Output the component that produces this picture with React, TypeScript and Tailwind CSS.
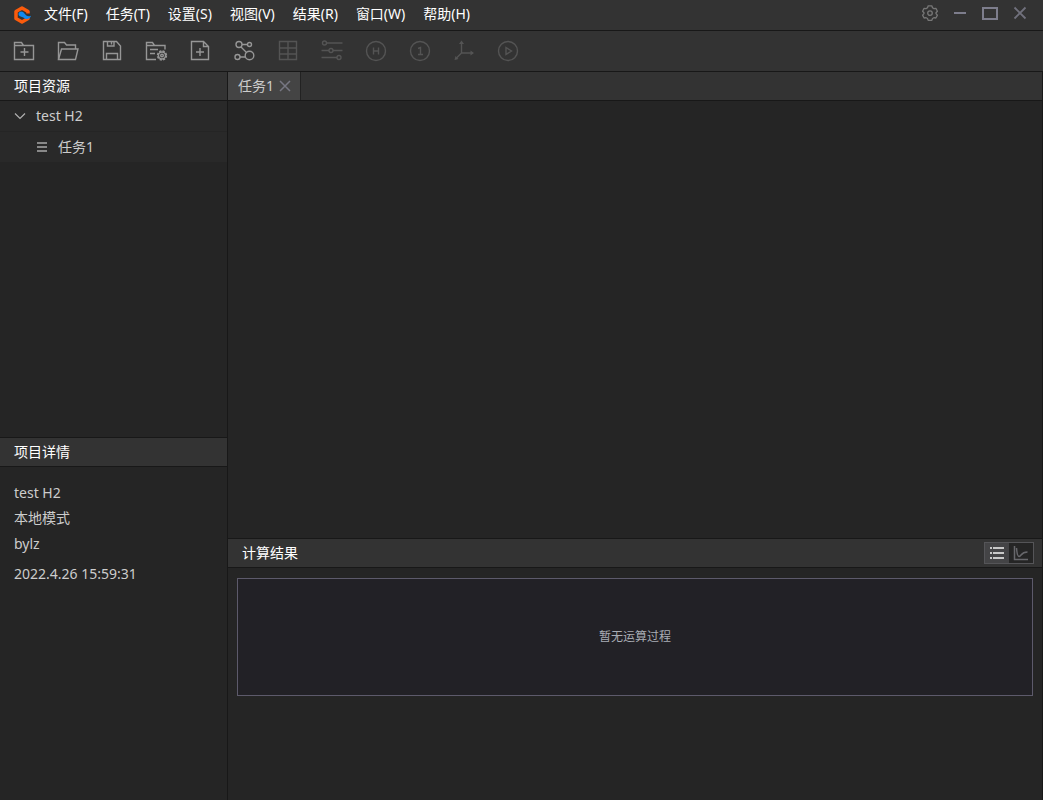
import clsx from "clsx";
import type { ReactNode } from "react";

const menus = [
  "文件(F)",
  "任务(T)",
  "设置(S)",
  "视图(V)",
  "结果(R)",
  "窗口(W)",
  "帮助(H)",
];

type Tool = {
  label: string;
  disabled?: boolean;
  icon: ReactNode;
};

const tools: Tool[] = [
  {
    label: "新建项目",
    icon: (
      <>
        <path d="M2.5 6.5v-3h7l2 3M2.5 6.5h19v14h-19z" />
        <path d="M12.5 9v8M8.5 13h8" />
      </>
    ),
  },
  {
    label: "打开项目",
    icon: (
      <>
        <path d="M2.5 20.5v-17h6l2 2.5h9v4" />
        <path d="M2.5 20.5l3-10.5h16.5l-2.5 10.5z" />
      </>
    ),
  },
  {
    label: "保存",
    icon: (
      <>
        <path d="M3.5 2.5h13l4 4.5v13.5h-17z" />
        <path d="M7.5 2.5v4.5h6.5v-4.5M11.5 3v2.5M6.5 20.5v-6h11v6" />
      </>
    ),
  },
  {
    label: "项目设置",
    icon: (
      <>
        <path d="M12 20.500h-9.500v-17h6l2 3h10.500v4M2.500 6.500h9M6 10.500h8M6 14.500h5" />
        <circle cx="18" cy="16.500" r="4.300" strokeWidth="1.800" strokeDasharray="2.200 1.180" />
        <circle cx="18" cy="16.500" r="3.500" />
        <circle cx="18" cy="16.500" r="1.300" />
      </>
    ),
  },
  {
    label: "新建任务",
    icon: (
      <>
        <path d="M3.5 2.5h12l5 5v13h-17zM15.5 2.5v5h5" />
        <path d="M12 9v8M8 13h8" />
      </>
    ),
  },
  {
    label: "分子结构",
    icon: (
      <>
        <circle cx="7" cy="5.5" r="3" />
        <circle cx="17.500" cy="5.5" r="2" />
        <circle cx="5.500" cy="18" r="2.5" />
        <circle cx="17.500" cy="16.5" r="4.3" />
        <path d="M10 5.5h5.5M9 8l5.5 5.5M8 18h5.5" />
      </>
    ),
  },
  {
    label: "表格",
    disabled: true,
    icon: <path d="M3.5 2.5h17v18h-17zM12 2.5v18M3.5 9h17M3.5 15h17" />,
  },
  {
    label: "参数",
    disabled: true,
    icon: (
      <>
        <circle cx="4.5" cy="4" r="2" />
        <circle cx="11" cy="11.5" r="2" />
        <circle cx="19" cy="18.5" r="2" />
        <path d="M7 4h15.5M1.5 11.5h7.5M13 11.5h9.5M1.5 18.5h15.5" />
      </>
    ),
  },
  {
    label: "氢原子",
    disabled: true,
    icon: (
      <>
        <circle cx="12" cy="12" r="9.5" />
        <path d="M9.5 8.5v7M14.5 8.5v7M9.5 12h5" />
      </>
    ),
  },
  {
    label: "编号",
    disabled: true,
    icon: (
      <>
        <circle cx="12" cy="12" r="9.5" />
        <path d="M10 9.5l2.5-1v7M10 15.5h5" />
      </>
    ),
  },
  {
    label: "坐标轴",
    disabled: true,
    icon: (
      <>
        <path d="M9.500 3v11h11.500M9.500 14l-6 6" />
        <path d="M9.500 1.500l2.500 3.500h-5zM22 14l-3.500 2.500v-5zM2.500 21l1-4 3 3z" fill="currentColor" stroke="none" />
      </>
    ),
  },
  {
    label: "运行",
    disabled: true,
    icon: (
      <>
        <circle cx="12" cy="12" r="9.5" />
        <path d="M10 8.5v7l5.500-3.500z" />
      </>
    ),
  },
];

const Logo = () => (
  <svg className="h-5 w-5" viewBox="0 0 20 20" aria-hidden="true">
    <path d="M10 3l6 3.400v7.200l-6 3.400-6-3.400V6.400z" fill="none" stroke="#fb5b0c" strokeWidth="3.500" strokeLinejoin="round" />
    <path d="M14 8.500h5.500v4H14z" fill="#333333" />
    <path d="M6.500 9c0-2.300 2.700-3.300 4.600-1.900l3.200 3.400c1.200.9 2.700 1.100 4.700.2-.6 2.200-2.600 3.500-4.800 3.300-1.900-.2-2.300-1.800-4.200-2.100C8 11.600 6.500 10.800 6.500 9z" fill="#1189ef" />
  </svg>
);

const TitleBar = () => (
  <header className="flex h-[31px] shrink-0 items-center border-b border-[#181818] pl-3">
    <Logo />
    <nav className="ml-3 flex flex-1 gap-[18px] pb-[2px] text-white">
      {menus.map((menu) => (
        <button key={menu} type="button" className="h-7 whitespace-nowrap">
          {menu}
        </button>
      ))}
    </nav>

    <div className="flex pr-2 pb-1">
      <button type="button" aria-label="设置" className="flex w-[30px] justify-center">
        <svg className="h-4 w-4" viewBox="0 0 16 16" fill="none" stroke="#777777" strokeWidth="1.300" strokeLinejoin="round">
          <path d="M6.200.8h3.600l.7 2 1.400.8 2-.3 1.500 2.900L14 7.800v.8l1.400 1.500-1.500 2.900-2-.3-1.400.8-.7 1.900H6.200l-.7-1.900-1.400-.8-2 .3L.6 10.100 2 8.600v-.8L.6 6.200l1.500-2.900 2 .3 1.400-.8z" />
          <circle cx="8" cy="8.100" r="2.300" />
        </svg>
      </button>
      <button type="button" aria-label="最小化" className="flex w-[30px] justify-center">
        <svg className="h-4 w-4" viewBox="0 0 16 16" fill="none" stroke="#7d7d8c" strokeWidth="2">
          <path d="M2 8h12" />
        </svg>
      </button>
      <button type="button" aria-label="最大化" className="flex w-[30px] justify-center">
        <svg className="h-4 w-4" viewBox="0 0 16 16" fill="none" stroke="#7d7d8c" strokeWidth="2">
          <path d="M1 3h14v11H1z" />
        </svg>
      </button>
      <button type="button" aria-label="关闭" className="flex w-[30px] justify-center">
        <svg className="h-4 w-4" viewBox="0 0 16 16" fill="none" stroke="#71717d" strokeWidth="1.800">
          <path d="M2.500 2.500l11 11M13.500 2.500l-11 11" />
        </svg>
      </button>
    </div>
  </header>
);

const Toolbar = () => (
  <div className="flex h-[41px] shrink-0 items-center border-b border-[#181818] pl-[2px]">
    {tools.map((tool) => (
      <button
        key={tool.label}
        type="button"
        aria-label={tool.label}
        disabled={tool.disabled}
        className={clsx(
          "flex w-11 justify-center",
          tool.disabled ? "text-[#545454]" : "text-[#969696]",
        )}
      >
        <svg className="h-6 w-6" viewBox="0 0 24 24" fill="none" stroke="currentColor" strokeWidth="1.400">
          {tool.icon}
        </svg>
      </button>
    ))}
  </div>
);

const PanelTitle = ({ children }: { children: ReactNode }) => (
  <h2 className="flex h-[29px] shrink-0 items-center border-b border-[#181818] bg-[#333333] px-[14px] text-white">
    {children}
  </h2>
);

const Sidebar = () => (
  <aside className="flex w-[228px] shrink-0 flex-col border-r border-[#181818]">
    <section className="flex-1">
      <PanelTitle>项目资源</PanelTitle>
      <ul className="bg-[#292929]">
        <li className="flex h-[31px] items-center border-b border-[#252525] pl-[14px]">
          <svg className="mr-[10px] h-3 w-3" viewBox="0 0 12 12" fill="none" stroke="#b0b0b0" strokeWidth="1.200">
            <path d="M1 3.500l5 5 5-5" />
          </svg>
          test H2
        </li>
        <li className="flex h-[31px] items-center border-b border-[#252525] pl-9">
          <svg className="mr-[10px] h-3 w-3" viewBox="0 0 12 12" fill="none" stroke="#888888" strokeWidth="2">
            <path d="M1 2h10M1 6h10M1 10h10" />
          </svg>
          任务1
        </li>
      </ul>
    </section>

    <section className="h-[363px] border-t border-[#181818]">
      <PanelTitle>项目详情</PanelTitle>
      <div className="px-[14px] pt-3">
        <p className="leading-7">test H2</p>
        <p className="leading-[22px]">本地模式</p>
        <p className="leading-[30px]">bylz</p>
        <p className="leading-[30px]">2022.4.26 15:59:31</p>
      </div>
    </section>
  </aside>
);

const Results = () => (
  <section className="flex h-[262px] flex-col border-t border-[#181818]">
    <div className="flex h-[29px] shrink-0 items-center justify-between border-b border-[#181818] bg-[#333333] pr-2 pl-[14px]">
      <h2 className="text-white">计算结果</h2>
      <div className="flex h-[22px] w-[50px] border border-[#555558]">
        <button type="button" aria-label="列表" className="flex flex-1 items-center justify-center bg-[#444446]">
          <svg className="h-4 w-4" viewBox="0 0 16 16" fill="none" stroke="#c8c8c8" strokeWidth="2">
            <path d="M1 3h2M4 3h11M1 8h2M4 8h11M1 13h2M4 13h11" />
          </svg>
        </button>
        <button type="button" aria-label="图表" className="flex flex-1 items-center justify-center bg-[#252525]">
          <svg className="h-4 w-4" viewBox="0 0 16 16" fill="none" stroke="#68686c" strokeWidth="1.500">
            <path d="M1.500 1v13.500H15" />
            <path d="M3.500 3c.3 4 1 8.500 2.500 8.500 2 0 2-4.500 8.500-4.500" />
          </svg>
        </button>
      </div>
    </div>
    <div className="mx-[9px] mt-[10px] flex h-[118px] items-center justify-center border border-[#5d5a6b] bg-[#222126] text-xs text-[#a9adb5]">
      暂无运算过程
    </div>
  </section>
);

const App = () => {
  return (
    <div className="flex h-screen flex-col bg-[#333333] font-['Noto_Sans','Noto_Sans_CJK_SC',sans-serif] text-sm text-[#cccccc]">
      <TitleBar />
      <Toolbar />
      <div className="flex min-h-0 flex-1 bg-[#252525]">
        <Sidebar />
        <main className="flex min-w-0 flex-1 flex-col border-r border-[#181818]">
          <div className="flex h-[29px] border-b border-[#181818] bg-[#333333]">
            <div className="flex items-center gap-[5px] border-r border-[#222222] bg-[#444444] pr-[9px] pl-[10px]">
              <button type="button">任务1</button>
              <button type="button" aria-label="关闭任务1">
                <svg className="h-3 w-3" viewBox="0 0 12 12" fill="none" stroke="#777783" strokeWidth="1.500">
                  <path d="M1 1l10 10M11 1L1 11" />
                </svg>
              </button>
            </div>
          </div>
          <div className="flex-1" />
          <Results />
        </main>
      </div>
    </div>
  );
};

export default App;
